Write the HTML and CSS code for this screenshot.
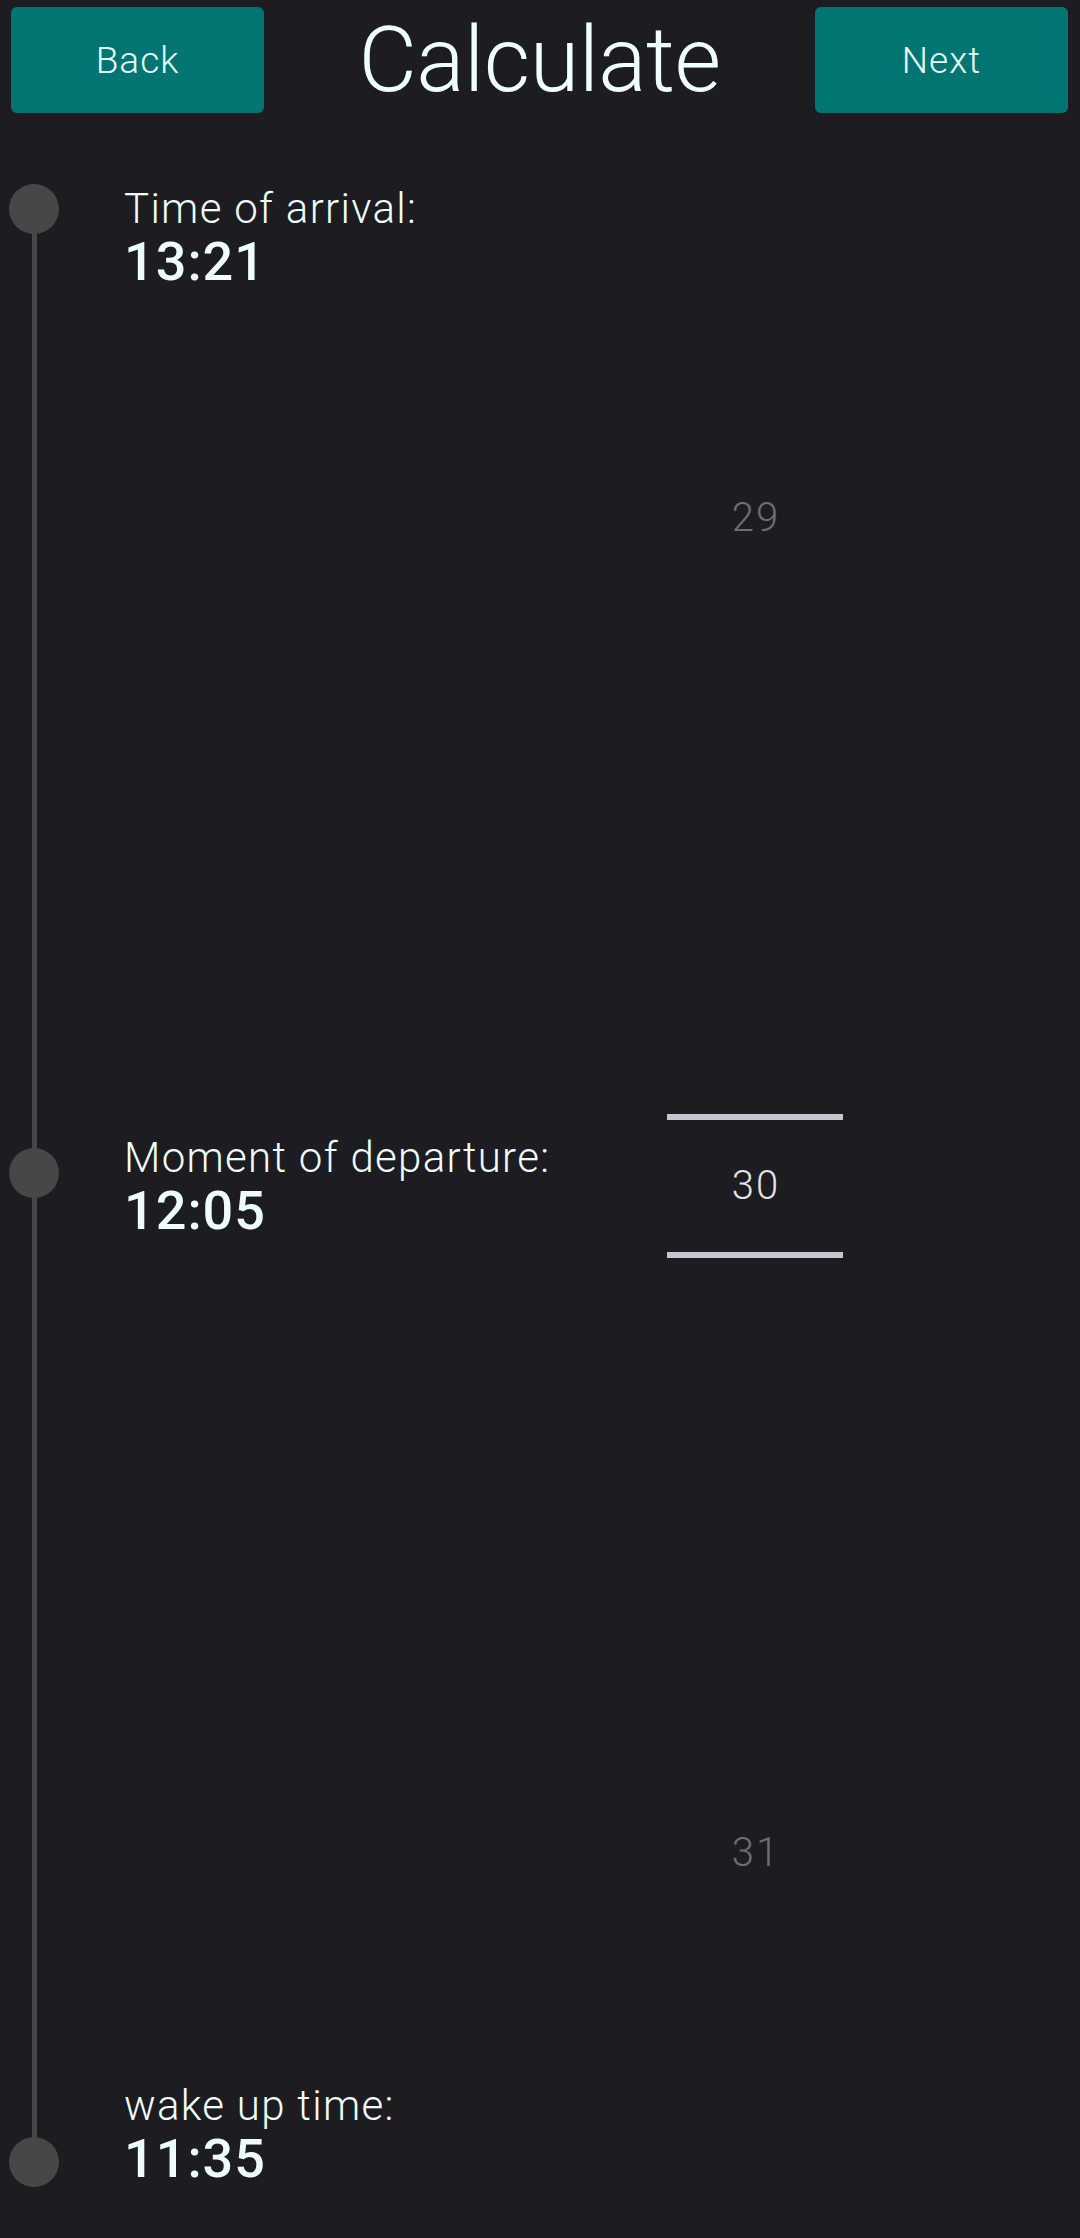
FILE: index.html
```html
<!DOCTYPE html>
<html lang="en">
<head>
<meta charset="utf-8">
<title>Calculate</title>
<link rel="stylesheet" href="styles.css">
</head>
<body>
<div class="screen">
  <header class="header">
    <button class="btn">Back</button>
    <h1 class="title">Calculate</h1>
    <button class="btn">Next</button>
  </header>
  <main class="main">
    <section class="timeline">
      <div class="stop">
        <span class="dot dot-top"></span>
        <div class="info">
          <div class="label">Time of arrival:</div>
          <div class="value">13:21</div>
        </div>
      </div>
      <div class="stop">
        <span class="dot dot-mid"></span>
        <div class="info">
          <div class="label">Moment of departure:</div>
          <div class="value">12:05</div>
        </div>
      </div>
      <div class="stop">
        <span class="dot dot-bottom"></span>
        <div class="info">
          <div class="label">wake up time:</div>
          <div class="value">11:35</div>
        </div>
      </div>
    </section>
    <section class="picker">
      <div class="item"><span class="num dim">29</span></div>
      <div class="item"><span class="num selected">30</span></div>
      <div class="item"><span class="num dim">31</span></div>
    </section>
  </main>
</div>
</body>
</html>
```
FILE: styles.css
```css
html, body {
  margin: 0;
  padding: 0;
  background: #1c1c21;
}
body {
  font-family: Roboto, "Liberation Sans", sans-serif;
  color: #eefcfc;
}
.screen {
  width: 1080px;
  height: 2238px;
  overflow: hidden;
  background: #1c1c21;
}
.header {
  display: flex;
  align-items: center;
  justify-content: space-between;
  padding: 7px 12px 0 11px;
  height: 106px;
}
.btn {
  width: 253px;
  height: 106px;
  border: none;
  border-radius: 6px;
  background: #007572;
  color: #e8fbfb;
  font-family: Roboto, "Liberation Sans", sans-serif;
  font-size: 37px;
  font-weight: 300;
  letter-spacing: 1px;
  padding: 0;
}
.title {
  margin: 0;
  font-size: 90px;
  font-weight: 300;
  letter-spacing: -0.5px;
  line-height: 106px;
  color: #effefe;
  padding-top: 2px;
}
.main {
  display: flex;
  margin-top: 71px;
  height: 2003px;
}
.timeline {
  position: relative;
  width: 667px;
  display: flex;
  flex-direction: column;
  justify-content: space-between;
}
.timeline::before {
  content: "";
  position: absolute;
  left: 32px;
  width: 5px;
  top: 25px;
  bottom: 25px;
  background: #474747;
}
.stop {
  display: flex;
  align-items: flex-start;
  height: 106px;
}
.dot {
  position: relative;
  flex: none;
  width: 50px;
  height: 50px;
  margin-left: 9px;
  border-radius: 50%;
  background: #474747;
}
.dot-top { margin-top: 0; }
.dot-mid { margin-top: 15px; }
.dot-bottom { margin-top: 56px; }
.info {
  margin-left: 65px;
}
.label {
  font-size: 42px;
  line-height: 50px;
  font-weight: 300;
  letter-spacing: 1.3px;
  white-space: nowrap;
}
.value {
  font-size: 54px;
  line-height: 56px;
  font-weight: 500;
  letter-spacing: 1px;
}
.picker {
  width: 176px;
  display: flex;
  flex-direction: column;
}
.item {
  flex: 1;
  display: flex;
  align-items: center;
  justify-content: center;
}
.num {
  display: flex;
  align-items: center;
  justify-content: center;
  width: 176px;
  font-size: 40px;
  line-height: 48px;
  font-weight: 300;
  letter-spacing: 2px;
  text-indent: 2px;
}
.dim {
  color: #6e6e72;
}
.selected {
  color: #e4e2e8;
  height: 132px;
  border-top: 6px solid #c8c4d0;
  border-bottom: 6px solid #c8c4d0;
}
```
